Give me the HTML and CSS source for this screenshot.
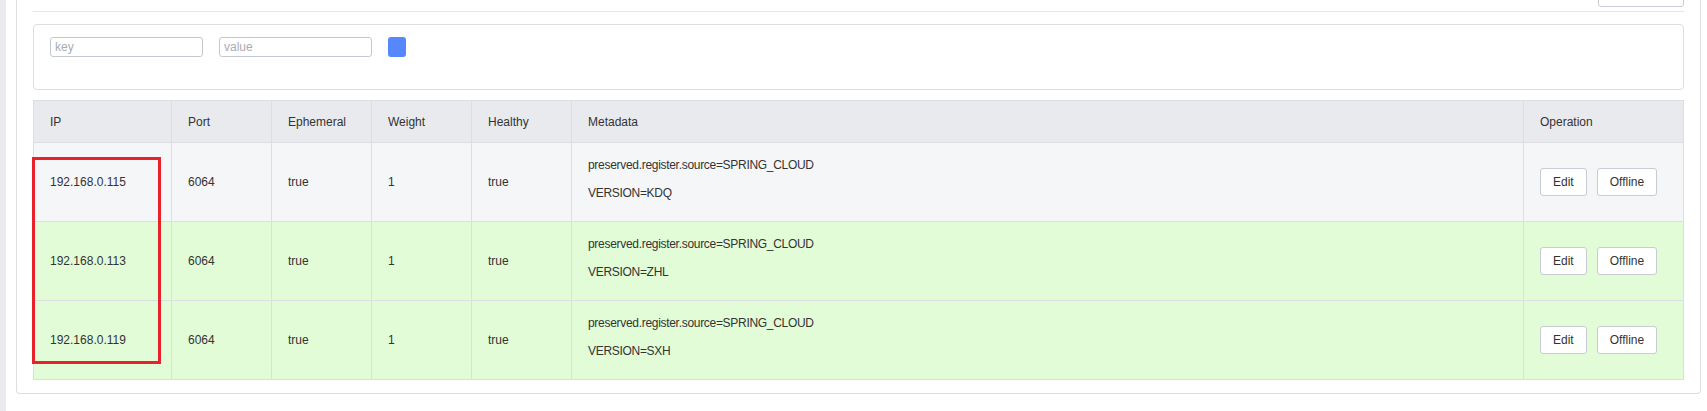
FILE: index.html
```html
<!DOCTYPE html>
<html>
<head>
<meta charset="utf-8">
<link rel="stylesheet" href="styles.css">
</head>
<body>
<div class="layout">
  <div class="side"></div>
  <div class="main">
    <div class="card">
      <div class="top-bar">
        <button class="top-btn"></button>
      </div>
      <div class="filter">
        <input class="inp" placeholder="key">
        <input class="inp" placeholder="value">
        <button class="add-btn"></button>
      </div>
      <div class="table-wrap">
        <table class="grid">
          <colgroup>
            <col class="c-ip"><col class="c-sm"><col class="c-sm"><col class="c-sm"><col class="c-sm"><col><col class="c-op">
          </colgroup>
          <thead>
            <tr><th>IP</th><th>Port</th><th>Ephemeral</th><th>Weight</th><th>Healthy</th><th>Metadata</th><th>Operation</th></tr>
          </thead>
          <tbody>
            <tr class="r-gray">
              <td>192.168.0.115</td><td>6064</td><td>true</td><td>1</td><td>true</td>
              <td><div class="meta-box"><div class="meta">preserved.register.source=SPRING_CLOUD</div><div class="meta">VERSION=KDQ</div></div></td>
              <td><div class="ops"><button class="btn">Edit</button><button class="btn">Offline</button></div></td>
            </tr>
            <tr class="r-green">
              <td>192.168.0.113</td><td>6064</td><td>true</td><td>1</td><td>true</td>
              <td><div class="meta-box"><div class="meta">preserved.register.source=SPRING_CLOUD</div><div class="meta">VERSION=ZHL</div></div></td>
              <td><div class="ops"><button class="btn">Edit</button><button class="btn">Offline</button></div></td>
            </tr>
            <tr class="r-green">
              <td>192.168.0.119</td><td>6064</td><td>true</td><td>1</td><td>true</td>
              <td><div class="meta-box"><div class="meta">preserved.register.source=SPRING_CLOUD</div><div class="meta">VERSION=SXH</div></div></td>
              <td><div class="ops"><button class="btn">Edit</button><button class="btn">Offline</button></div></td>
            </tr>
          </tbody>
        </table>
        <div class="highlight"></div>
      </div>
    </div>
  </div>
</div>
</body>
</html>
```

FILE: styles.css
```css
* { box-sizing: border-box; }
html, body { margin: 0; padding: 0; background: #fff; }
body {
  font-family: "Liberation Sans", Arial, sans-serif;
  font-size: 12px;
  color: #333;
  height: 411px;
  overflow: hidden;
}
.layout { display: flex; height: 411px; }
.side { width: 6px; background: #e9ebef; flex: none; }
.main { flex: 1; padding: 0 6px 0 10px; }
.card {
  margin-top: -19px;
  border: 1px solid #dcdee2;
  border-top: none;
  border-radius: 0 0 4px 4px;
  padding: 0 16px 13px 16px;
  background: #fff;
}
.top-bar {
  height: 31px;
  border-bottom: 1px solid #e4e6ea;
  display: flex;
  justify-content: flex-end;
  align-items: flex-end;
  padding-bottom: 4px;
}
.top-btn {
  width: 86px;
  height: 28px;
  border: 1px solid #c8cbd1;
  border-radius: 3px;
  background: #fff;
}
.filter {
  margin-top: 12px;
  height: 66px;
  border: 1px solid #dcdee2;
  border-radius: 4px;
  padding: 12px 16px;
  display: flex;
  align-items: flex-start;
  gap: 16px;
}
.inp {
  width: 153px;
  height: 20px;
  border: 1px solid #c5c8ce;
  border-radius: 3px;
  padding: 0 4px;
  font-family: "Liberation Sans", Arial, sans-serif;
  font-size: 12px;
  color: #333;
  outline: none;
}
.inp::placeholder { color: #a8acb3; }
.add-btn {
  width: 18px;
  height: 20px;
  border: none;
  border-radius: 3px;
  background: #5687fc;
  padding: 0;
}
.table-wrap { position: relative; margin-top: 10px; }
.grid {
  width: 100%;
  border-collapse: collapse;
  table-layout: fixed;
}
.c-ip { width: 138px; }
.c-sm { width: 100px; }
.c-op { width: 160px; }
.grid th, .grid td {
  border: 1px solid #dcdee2;
  text-align: left;
  padding: 0 16px;
  font-weight: normal;
  vertical-align: middle;
}
.grid th {
  background: #e9eaee;
  height: 42px;
  color: #333;
}
.grid td { height: 79px; }
.r-gray td { background: #f5f6f8; }
.r-green td { background: #e2fcd8; }
.meta-box { padding-bottom: 7px; }
.meta { line-height: 28px; letter-spacing: -0.3px; }
.ops { display: flex; gap: 10px; }
.btn {
  height: 28px;
  padding: 0 12px;
  border: 1px solid #c8cbd1;
  border-radius: 3px;
  background: #fff;
  font-family: "Liberation Sans", Arial, sans-serif;
  font-size: 12px;
  color: #333;
}
.highlight {
  position: absolute;
  left: -1px;
  top: 57px;
  width: 129px;
  height: 207px;
  border: 3px solid #e8212a;
  pointer-events: none;
}
```
